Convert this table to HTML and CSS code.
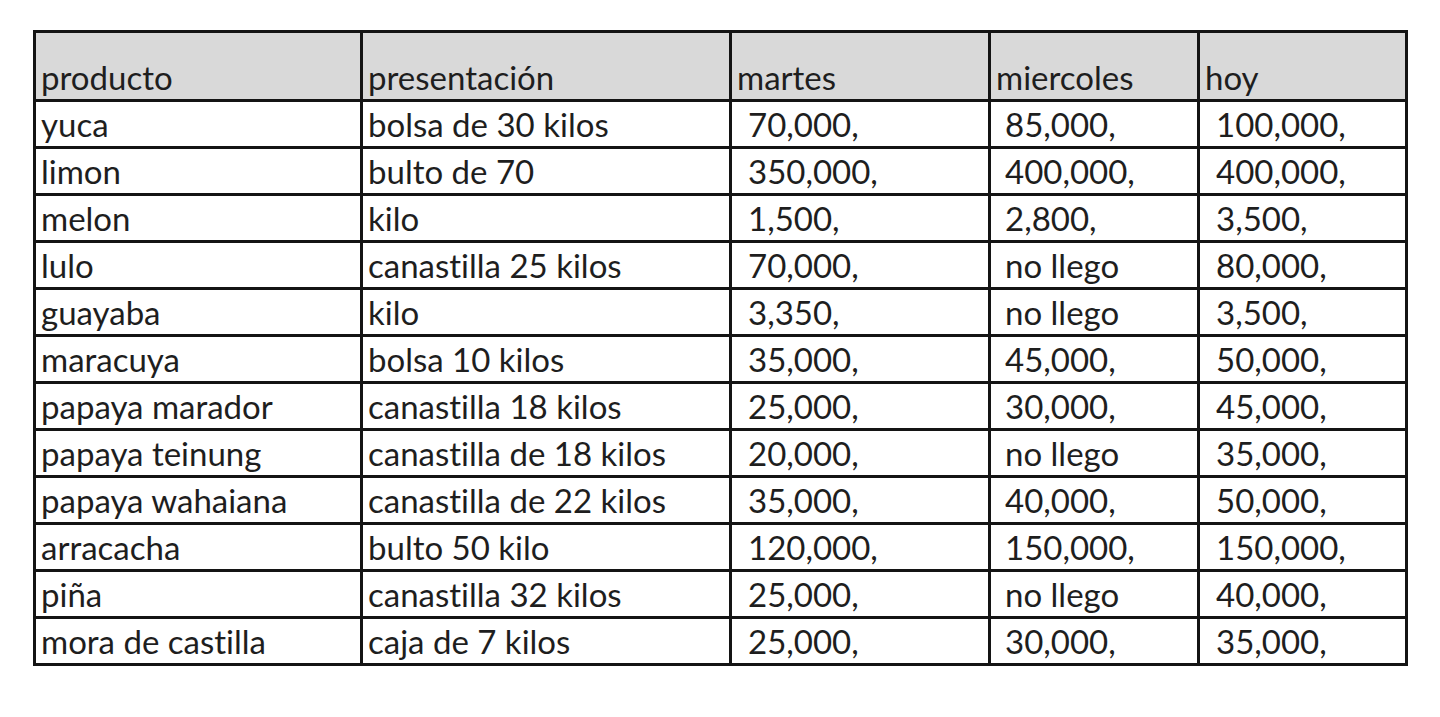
FILE: index.html
```html
<!DOCTYPE html>
<html lang="es">
<head>
<meta charset="utf-8">
<title>precios</title>
<link rel="stylesheet" href="styles.css">
</head>
<body>
<table class="prices">
  <colgroup>
    <col class="c1"><col class="c2"><col class="c3"><col class="c4"><col class="c5">
  </colgroup>
  <thead>
    <tr><th>producto</th><th>presentación</th><th>martes</th><th>miercoles</th><th>hoy</th></tr>
  </thead>
  <tbody>
    <tr><td>yuca</td><td>bolsa de 30 kilos</td><td class="n3">70,000,</td><td class="n4">85,000,</td><td class="n5">100,000,</td></tr>
    <tr><td>limon</td><td>bulto de 70</td><td class="n3">350,000,</td><td class="n4">400,000,</td><td class="n5">400,000,</td></tr>
    <tr><td>melon</td><td>kilo</td><td class="n3">1,500,</td><td class="n4">2,800,</td><td class="n5">3,500,</td></tr>
    <tr><td>lulo</td><td>canastilla 25 kilos</td><td class="n3">70,000,</td><td class="n4">no llego</td><td class="n5">80,000,</td></tr>
    <tr><td>guayaba</td><td>kilo</td><td class="n3">3,350,</td><td class="n4">no llego</td><td class="n5">3,500,</td></tr>
    <tr><td>maracuya</td><td>bolsa 10 kilos</td><td class="n3">35,000,</td><td class="n4">45,000,</td><td class="n5">50,000,</td></tr>
    <tr><td>papaya marador</td><td>canastilla 18 kilos</td><td class="n3">25,000,</td><td class="n4">30,000,</td><td class="n5">45,000,</td></tr>
    <tr><td>papaya teinung</td><td>canastilla de 18 kilos</td><td class="n3">20,000,</td><td class="n4">no llego</td><td class="n5">35,000,</td></tr>
    <tr><td>papaya wahaiana</td><td>canastilla de 22 kilos</td><td class="n3">35,000,</td><td class="n4">40,000,</td><td class="n5">50,000,</td></tr>
    <tr><td>arracacha</td><td>bulto 50 kilo</td><td class="n3">120,000,</td><td class="n4">150,000,</td><td class="n5">150,000,</td></tr>
    <tr><td>piña</td><td>canastilla 32 kilos</td><td class="n3">25,000,</td><td class="n4">no llego</td><td class="n5">40,000,</td></tr>
    <tr><td>mora de castilla</td><td>caja de 7 kilos</td><td class="n3">25,000,</td><td class="n4">30,000,</td><td class="n5">35,000,</td></tr>
  </tbody>
</table>
</body>
</html>
```
FILE: styles.css
```css
html, body {
  margin: 0;
  padding: 0;
  background: #ffffff;
}

body {
  padding: 30px 0 0 33px;
  font-family: Lato, "Open Sans", "Liberation Sans", sans-serif;
  color: #1e1e1e;
}

.prices {
  border-collapse: separate;
  border-spacing: 0;
  table-layout: fixed;
  width: 1375px;
  border-top: 3px solid #141414;
  border-left: 3px solid #141414;
  font-size: 33px;
  font-variant-ligatures: none;
  font-feature-settings: "liga" 0, "clig" 0;
}

.c1 { width: 327px; }
.c2 { width: 369px; }
.c3 { width: 259px; }
.c4 { width: 209px; }
.c5 { width: 208px; }

.prices th,
.prices td {
  box-sizing: border-box;
  border-right: 3px solid #141414;
  border-bottom: 3px solid #141414;
  padding: 0 0 5px 5px;
  text-align: left;
  vertical-align: bottom;
  font-weight: normal;
  line-height: 1;
  white-space: nowrap;
  overflow: hidden;
}

.prices th {
  height: 69px;
  background: #d9d9d9;
}

.prices td {
  height: 47px;
}

.prices .n3 { padding-left: 16px; }
.prices .n4 { padding-left: 14px; }
.prices .n5 { padding-left: 16px; }
```
